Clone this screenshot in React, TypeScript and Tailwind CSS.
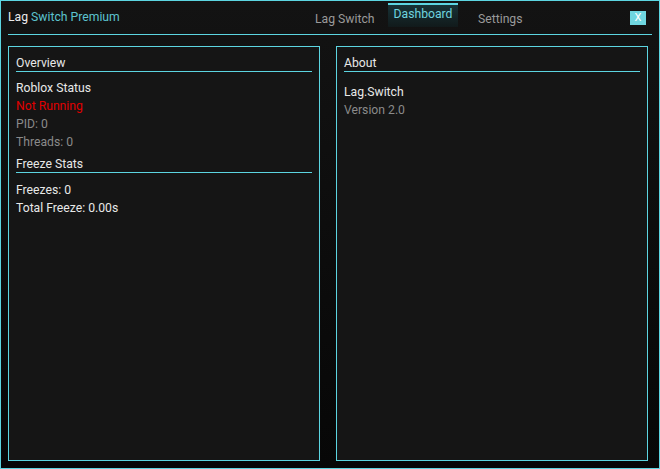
export default function App() {
  return (
    <div
      className="w-[660px] h-[469px] border border-[#5cd5e1] bg-gradient-to-b from-[#131313] to-[#070707] text-[12.2px] text-[#e8e8e8] flex flex-col"
      style={{ fontFamily: 'Roboto, "Noto Sans", sans-serif' }}
    >
      {/* HEADER */}
      <div className="h-[33px] flex items-start pl-[7px] pr-[13px]">
        <div className="mt-[7px] leading-[18px] w-[307px] shrink-0">
          <span className="text-[#ececec]">Lag</span>{' '}
          <span className="text-[#5cc3cf]">Switch Premium</span>
        </div>
        <div className="mt-[9px] leading-[18px] w-[59px] shrink-0 whitespace-nowrap text-[#9a9a9a]">Lag Switch</div>
        <div className="ml-[14px] mt-[2px] w-[70px] shrink-0 flex flex-col">
          <div className="h-[2px] bg-[#5cd5e1]" />
          <div className="h-[22px] bg-gradient-to-b from-[#173236] to-[#111a1b] text-[#6fd3df] leading-[18px] text-center">
            Dashboard
          </div>
        </div>
        <div className="ml-[20px] mt-[9px] leading-[18px] text-[#9a9a9a]">Settings</div>
        <div className="ml-auto mt-[10px] w-[16px] h-[14px] bg-[#6fd6e0] text-white text-[11px] leading-[14px] text-center">
          X
        </div>
      </div>
      <div className="ml-[7px] w-[644px] h-px bg-[#5cd5e1]" />

      {/* PANELS */}
      <div className="flex gap-[16px] pl-[7px] mt-[11px]">
        <Panel>
          <SectionHeader title="Overview" />
          <div className="mt-[6px] leading-[18px] pt-px">
            <p>Roblox Status</p>
            <p className="text-[#e00000]">Not Running</p>
            <p className="text-[#8a8a8a]">PID: 0</p>
            <p className="text-[#8a8a8a]">Threads: 0</p>
          </div>
          <div className="mt-[3px]">
            <SectionHeader title="Freeze Stats" />
          </div>
          <div className="mt-[7px] leading-[18px] pt-px">
            <p>Freezes: 0</p>
            <p>Total Freeze: 0.00s</p>
          </div>
        </Panel>
        <Panel>
          <SectionHeader title="About" />
          <div className="mt-[10px] leading-[18px] pt-px">
            <p>Lag.Switch</p>
            <p className="text-[#8a8a8a]">Version 2.0</p>
          </div>
        </Panel>
      </div>
    </div>
  );
}

function Panel({ children }: { children: React.ReactNode }) {
  return (
    <div className="w-[312px] h-[415px] border border-[#5cd5e1] bg-[#151515] px-[7px] pt-[6px]">
      {children}
    </div>
  );
}

function SectionHeader({ title }: { title: string }) {
  return (
    <div>
      <p className="leading-[18px] pt-px -mb-px">{title}</p>
      <div className="h-px bg-[#5cd5e1]" />
    </div>
  );
}
